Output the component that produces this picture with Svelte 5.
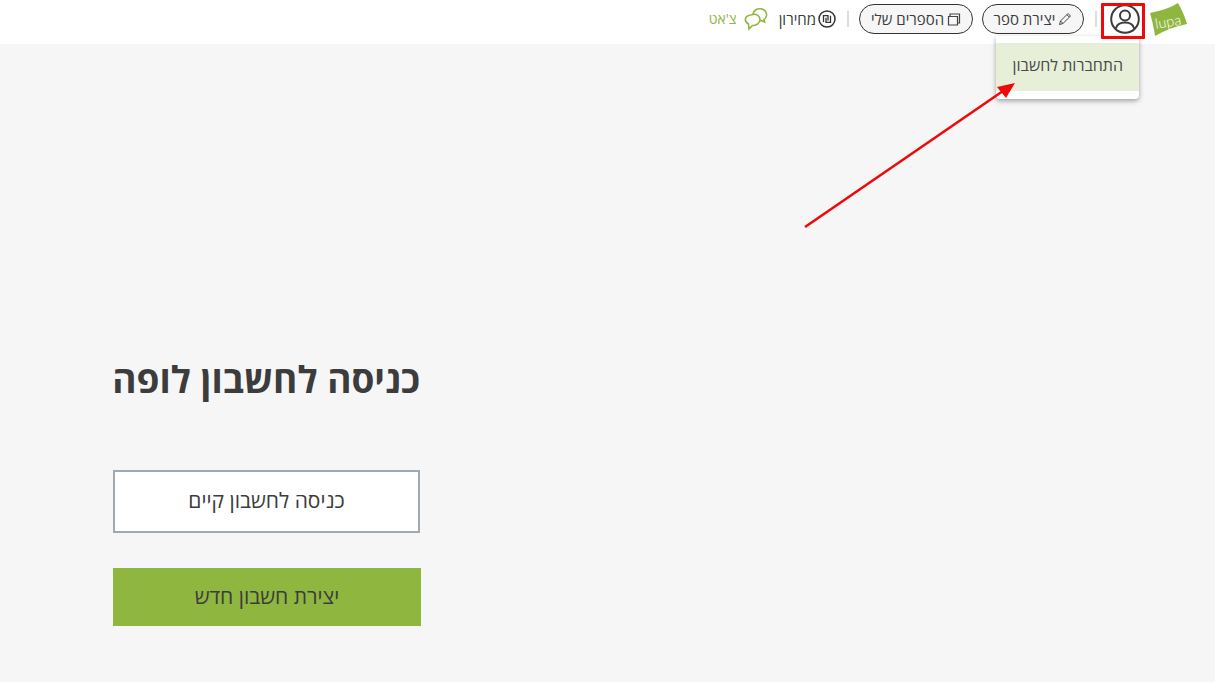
<script>
  let title = 'כניסה לחשבון לופה';
</script>

<div class="page" dir="rtl">
  <header class="topbar">
    <a class="logo" href="#top" aria-label="lupa">
      <svg width="38" height="36" viewBox="0 0 38 36">
        <path d="M0 11 C10 9 20 6 28 1 C32 8 35 15 37 22 C26 24 15 28 5 34 C4 26 2 18 0 11 Z" fill="#8fb63f" />
        <text x="6" y="27" direction="ltr" font-size="14.5" font-weight="300" fill="#fff" font-family="Lato, sans-serif" transform="rotate(-10 6 27)">lupa</text>
      </svg>
    </a>
    <div class="user">
      <svg width="30" height="30" viewBox="0 0 30 30" fill="none" stroke="#3c3c3c" stroke-width="2">
        <circle cx="15" cy="15" r="13.8" />
        <circle cx="15" cy="11.5" r="5" />
        <path d="M5.8 24.5 C7 20 11 18.6 15 18.6 C19 18.6 23 20 24.2 24.5" />
      </svg>
    </div>
    <span class="sep first"></span>
    <nav class="nav">
      <button class="pill create">
        <svg width="14" height="14" viewBox="0 0 14 14" fill="none" stroke="#444" stroke-width="1">
          <path d="M1.5 12.5 L2.5 9 L10 1.5 L12.5 4 L5 11.5 Z M9 2.8 L11.2 5 M2.5 9 L5 11.5" />
        </svg>
        <span>יצירת ספר</span>
      </button>
      <button class="pill books">
        <svg width="14" height="14" viewBox="0 0 14 14" fill="none" stroke="#444" stroke-width="1.2">
          <path d="M1.5 4.5 H10.5 V13 H1.5 Z M3 4.5 V2 H12.5 V11 H10.5" />
        </svg>
        <span>הספרים שלי</span>
      </button>
      <span class="sep"></span>
      <a class="link price" href="#top">
        <svg width="18" height="18" viewBox="0 0 18 18" fill="none" stroke="#333">
          <circle cx="9" cy="9" r="8" stroke-width="1.5" />
          <path d="M5.5 12 V5.6 H10 V10.5 M8 7.8 V12.4 H12.5 V5.8" stroke-width="1.3" />
        </svg>
        <span>מחירון</span>
      </a>
      <a class="link chat" href="#top">
        <svg width="24" height="24" viewBox="0 0 24 24" fill="none" stroke="#8fb63f" stroke-width="1.6">
          <path d="M9 7 C9.5 3.5 13 1.5 16.5 1.8 C20.5 2.2 23 5 22.5 8.5 C22.2 10.5 21 12 20 12.5 L20.5 15 L17.5 13.5 L16 13.7" />
          <path d="M9 7.5 C12.5 6.5 16 9 16 12.5 C16 16 12.5 18.5 8.5 18.5 L5 22 L4.5 17 C2 15.5 1 13.5 1.5 11.5 C2 9 5 8 9 7.5 Z" />
        </svg>
        <span>צ'אט</span>
      </a>
    </nav>
  </header>

  <main class="content">
    <section class="login">
      <h1>{title}</h1>
      <button class="btn existing">כניסה לחשבון קיים</button>
      <button class="btn create-account">יצירת חשבון חדש</button>
    </section>
  </main>

  <div class="menu">
    <div class="menu-item">התחברות לחשבון</div>
  </div>

  <div class="mark"></div>
  <svg class="arrow" width="220" height="160" viewBox="0 0 220 160">
    <line x1="5" y1="149" x2="203" y2="13" stroke="#ee0a0a" stroke-width="2.6" />
    <path d="M215 5 L197 9 L206 20 Z" fill="#ee0a0a" />
  </svg>
</div>

<style>
  :global(body) {
    margin: 0;
    background: #f6f6f6;
  }

  .page {
    position: relative;
    height: 682px;
    overflow: hidden;
    font-family: "Open Sans", "Noto Sans", "Liberation Sans", sans-serif;
    color: #3c3c3c;
    background: #f6f6f6;
  }

  .topbar {
    display: flex;
    align-items: center;
    height: 44px;
    padding-right: 27px;
    background: #fff;
  }

  .logo {
    display: flex;
    margin-left: 10px;
    margin-top: -4px;
  }

  .user {
    display: flex;
    margin-left: 13px;
    margin-top: -6px;
  }

  .sep {
    width: 2px;
    height: 16px;
    background: #ddd;
  }

  .sep.first {
    margin-left: 11px;
    margin-top: -6px;
  }

  .nav {
    display: flex;
    align-items: center;
    margin-top: -7px;
  }

  .pill {
    display: flex;
    align-items: center;
    justify-content: center;
    gap: 3px;
    height: 30px;
    padding: 0;
    border: 1px solid #333;
    border-radius: 15px;
    background: #f6f6f6;
    color: #3c3c3c;
    font: inherit;
    font-size: 15px;
    white-space: nowrap;
  }

  .create {
    width: 102px;
    margin-left: 9px;
  }

  .books {
    width: 114px;
    margin-left: 10px;
  }

  .nav .sep {
    margin-left: 11px;
  }

  .link {
    display: flex;
    align-items: center;
    gap: 2px;
    font-size: 15px;
    color: #3c3c3c;
    text-decoration: none;
    white-space: nowrap;
  }

  .price {
    margin-left: 11px;
  }

  .chat {
    color: #8fb63f;
    font-size: 14px;
    gap: 7px;
  }

  .content {
    padding: 0 113px;
  }

  .login {
    display: flex;
    flex-direction: column;
    align-items: flex-end;
    width: 308px;
    position: absolute;
    left: 113px;
    top: 355px;
  }

  h1 {
    margin: 0 0 67px;
    font-size: 37px;
    line-height: 48px;
    font-weight: 700;
    text-align: right;
    width: 307px;
    white-space: nowrap;
  }

  .btn {
    font: inherit;
    font-size: 21px;
    color: #3c3c3c;
    padding: 0 0 3px;
  }

  .existing {
    width: 307px;
    height: 63px;
    margin-bottom: 35px;
    border: 2px solid #a0a8b0;
    background: #fff;
  }

  .create-account {
    width: 308px;
    height: 58px;
    border: 0;
    background: #8fb63f;
  }

  .menu {
    position: absolute;
    left: 996px;
    top: 36px;
    width: 143px;
    height: 63px;
    padding-top: 7px;
    box-sizing: border-box;
    background: #fff;
    box-shadow: 0 2px 5px rgba(0, 0, 0, 0.35);
    border-radius: 0 0 4px 4px;
  }

  .menu-item {
    height: 48px;
    line-height: 45px;
    padding-right: 16px;
    font-size: 16px;
    color: #4a4a4a;
    background: #e8efd9;
  }

  .mark {
    position: absolute;
    left: 1101px;
    top: 3px;
    width: 44px;
    height: 36px;
    box-sizing: border-box;
    border: 3px solid #ee0a0a;
    border-radius: 1px;
  }

  .arrow {
    position: absolute;
    left: 800px;
    top: 78px;
  }
</style>
